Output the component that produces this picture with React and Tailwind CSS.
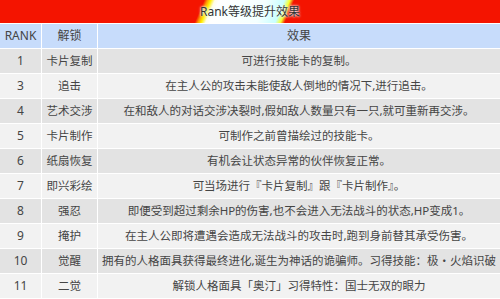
const rows = [
  { rank: '1', unlock: '卡片复制', effect: '可进行技能卡的复制。' },
  { rank: '3', unlock: '追击', effect: '在主人公的攻击未能使敌人倒地的情况下,进行追击。' },
  { rank: '4', unlock: '艺术交涉', effect: '在和敌人的对话交涉决裂时,假如敌人数量只有一只,就可重新再交涉。' },
  { rank: '5', unlock: '卡片制作', effect: '可制作之前曾描绘过的技能卡。' },
  { rank: '6', unlock: '纸扇恢复', effect: '有机会让状态异常的伙伴恢复正常。' },
  { rank: '7', unlock: '即兴彩绘', effect: '可当场进行『卡片复制』跟『卡片制作』。' },
  { rank: '8', unlock: '强忍', effect: '即便受到超过剩余HP的伤害,也不会进入无法战斗的状态,HP变成1。' },
  { rank: '9', unlock: '掩护', effect: '在主人公即将遭遇会造成无法战斗的攻击时,跑到身前替其承受伤害。' },
  { rank: '10', unlock: '觉醒', effect: '拥有的人格面具获得最终进化,诞生为神话的诡骗师。习得技能：极・火焰识破' },
  { rank: '11', unlock: '二觉', effect: '解锁人格面具「奥汀」习得特性：国士无双的眼力' },
];

function Cell({ children, bg }) {
  return (
    <div className={`${bg} flex items-center justify-center whitespace-nowrap overflow-hidden`}>
      {children}
    </div>
  );
}

export default function App() {
  return (
    <div className="w-[500px] h-[299px] overflow-hidden bg-white text-[#454545] font-['Noto_Sans','Noto_Sans_CJK_SC',sans-serif]">
      {/* Title bar */}
      <div className="h-[23px] flex items-center justify-center bg-[linear-gradient(113deg,#f41400_188px,#ff9a00_191px,#ffee00_194px,#fffde8_198px,#ffffff_202px,#f4ffff_245px,#c8ffff_262px,#f6ff30_267px,#f41400_271px)]">
        <span className="text-[12px] leading-none text-[#333] [text-shadow:0_0_2px_#ffffff,0_0_3px_#d8ffff]">
          Rank等级提升效果
        </span>
      </div>

      {/* Table */}
      <div className="mt-px grid grid-cols-[41px_55px_1fr] auto-rows-[24px] gap-px text-[11.5px] leading-none">
        <Cell bg="bg-[#c7dcfb]"><span className="text-[12px]">RANK</span></Cell>
        <Cell bg="bg-[#c7dcfb]"><span className="text-[12px]">解锁</span></Cell>
        <Cell bg="bg-[#c7dcfb]"><span className="text-[12px]">效果</span></Cell>
        {rows.map((r, i) => {
          const bg = i % 2 === 0 ? 'bg-[#e3e3e3]' : 'bg-[#f2f2f2]';
          return [
            <Cell key={r.rank + 'a'} bg={bg}><span className="text-[12px]">{r.rank}</span></Cell>,
            <Cell key={r.rank + 'b'} bg={bg}>{r.unlock}</Cell>,
            <Cell key={r.rank + 'c'} bg={bg}>{r.effect}</Cell>,
          ];
        })}
      </div>
    </div>
  );
}
